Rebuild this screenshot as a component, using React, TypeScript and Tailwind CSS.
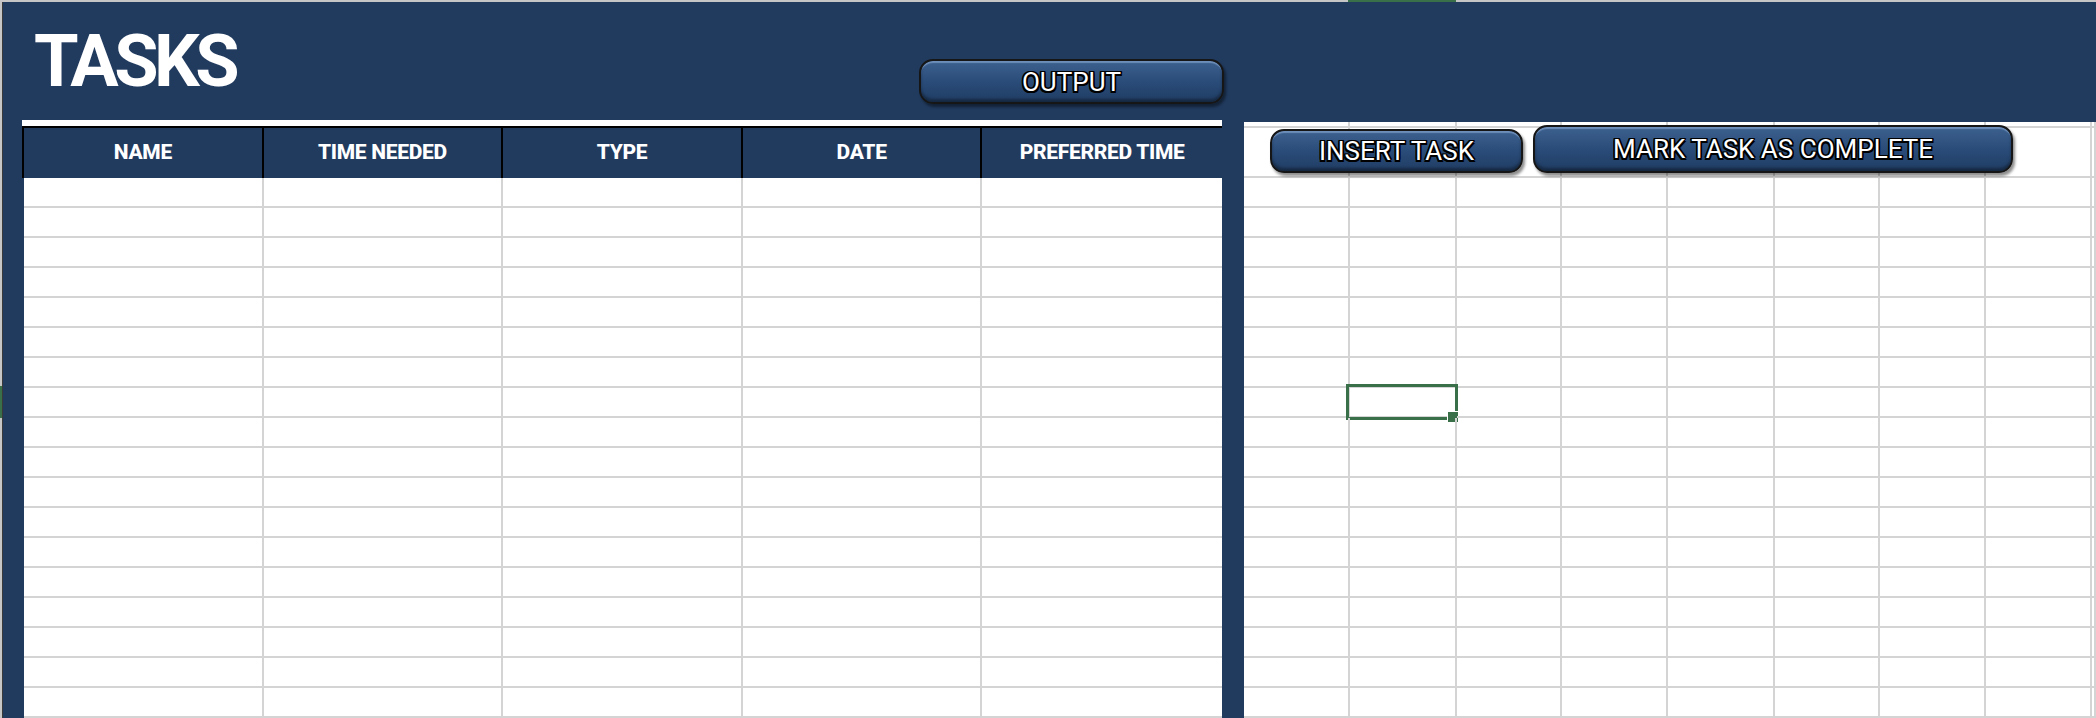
import React from "react";

const columns = ["NAME", "TIME NEEDED", "TYPE", "DATE", "PREFERRED TIME"];
const rows = Array.from({ length: 18 }, (_, i) => i);
const sideCols = Array.from({ length: 9 }, (_, i) => i);

function SheetButton({ label, className }: { label: string; className: string }) {
  return (
    <div
      className={`flex items-center justify-center rounded-[14px] border-2 border-[#161616] bg-linear-to-b from-[#3d618f] via-[#2a4c79] to-[#203d64] shadow-[inset_0_3px_1px_-1px_rgba(150,180,220,0.55),inset_0_-3px_3px_rgba(0,0,0,0.35),2px_3px_3px_rgba(0,0,0,0.45)] ${className}`}
    >
      <span className="font-['Roboto',sans-serif] text-[26px] leading-none text-white [text-shadow:-1.5px_-1.5px_0_#000,1.5px_-1.5px_0_#000,-1.5px_1.5px_0_#000,1.5px_1.5px_0_#000,0_1.5px_0_#000,0_-1.5px_0_#000,1.5px_0_0_#000,-1.5px_0_0_#000]">
        {label}
      </span>
    </div>
  );
}

export default function App() {
  return (
    <div className="flex h-[718px] w-[2096px] flex-col overflow-hidden bg-white font-['Roboto',sans-serif]">
      {/* column header strip */}
      <div className="flex h-[2px] bg-[#c6c6c6]">
        <div className="w-[1348px]" />
        <div className="w-[108px] bg-[#3a7049]" />
      </div>

      <div className="flex flex-1">
        {/* row header strip */}
        <div className="flex w-[3px] flex-col border-r border-[#3a3a3a] bg-[#c6c6c6]">
          <div className="h-[384px]" />
          <div className="h-[32px] bg-[#3a7049]" />
        </div>

        <div className="flex flex-1 flex-col bg-[#213b5f]">
          {/* banner */}
          <div className="flex h-[118px]">
            <div className="w-[916px] pl-[31px] pt-[24px]">
              <h1 className="text-[72px] font-bold leading-none tracking-[-4.5px] text-white">TASKS</h1>
            </div>
            <div className="pt-[57px]">
              <SheetButton label="OUTPUT" className="h-[45px] w-[305px]" />
            </div>
          </div>

          <div className="flex flex-1">
            <div className="w-[19px]" />

            {/* task table */}
            <div className="flex w-[1200px] flex-col">
              <div className="h-[6px] bg-white" />
              <div className="grid h-[52px] grid-cols-5 border-t-2 border-l-2 border-black bg-[#213b5f]">
                {columns.map((c, i) => (
                  <div
                    key={c}
                    className={`flex items-center justify-center text-[21px] font-extrabold tracking-[-0.3px] text-white ${i < 4 ? "border-r-2 border-black" : ""}`}
                  >
                    {c}
                  </div>
                ))}
              </div>
              {rows.map((r) => (
                <div key={r} className="grid grid-cols-5 border-l-2 border-[#213b5f] bg-white">
                  {columns.map((c, i) => (
                    <div
                      key={c}
                      className={`h-[30px] border-b-2 border-[#d4d4d4] ${i < 4 ? "border-r-2" : ""}`}
                    />
                  ))}
                </div>
              ))}
            </div>

            <div className="w-[22px]" />

            {/* sheet cells */}
            <div className="relative flex flex-1 flex-col bg-white">
              <div className="grid h-[8px] grid-cols-[106px_107px_105px_106px_107px_105px_106px_106px_1fr] border-t-2 border-[#213b5f]">
                {sideCols.map((c) => (
                  <div key={c} className="border-r-2 border-b-2 border-[#d4d4d4]" />
                ))}
              </div>
              <div className="grid h-[50px] grid-cols-[106px_107px_105px_106px_107px_105px_106px_106px_1fr]">
                {sideCols.map((c) => (
                  <div key={c} className="border-r-2 border-b-2 border-[#d4d4d4]" />
                ))}
              </div>
              {rows.map((r) => (
                <div key={r} className="grid h-[30px] grid-cols-[106px_107px_105px_106px_107px_105px_106px_106px_1fr]">
                  {sideCols.map((c) => (
                    <div key={c} className="relative border-r-2 border-b-2 border-[#d4d4d4]">
                      {r === 7 && c === 1 && (
                        <>
                          <div className="absolute -top-[4px] -left-[4px] h-[36px] w-[112px] border-[3px] border-[#3a7049]" />
                          <div className="absolute top-[23px] left-[97px] h-[12px] w-[12px] border border-white bg-[#3a7049]" />
                        </>
                      )}
                    </div>
                  ))}
                </div>
              ))}

              <SheetButton label="INSERT TASK" className="absolute top-[9px] left-[26px] h-[44px] w-[253px]" />
              <SheetButton label="MARK TASK AS COMPLETE" className="absolute top-[5px] left-[289px] h-[48px] w-[480px]" />
            </div>
          </div>
        </div>
      </div>
    </div>
  );
}
